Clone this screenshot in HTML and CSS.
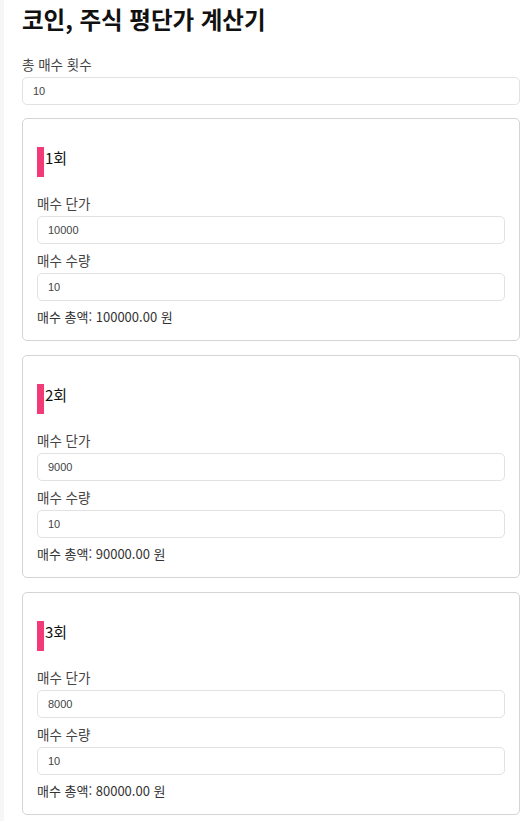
FILE: index.html
```html
<!DOCTYPE html>
<html lang="ko">
<head>
  <meta charset="UTF-8">
  <meta name="viewport" content="width=device-width, initial-scale=1.0">
  <title>코인, 주식 평단가 계산기</title>
  <link rel="stylesheet" href="styles.css">
</head>
<body>
  <div class="container">
    <h1 class="title">코인, 주식 평단가 계산기</h1>

    <label class="label" for="count">총 매수 횟수</label>
    <input class="input" id="count" type="text" value="10">

    <div class="rounds">
      <div class="round">
        <h3 class="round-title">1회</h3>
        <label class="label">매수 단가</label>
        <input class="input" type="text" value="10000">
        <label class="label">매수 수량</label>
        <input class="input" type="text" value="10">
        <div class="total">매수 총액: 100000.00 원</div>
      </div>

      <div class="round">
        <h3 class="round-title">2회</h3>
        <label class="label">매수 단가</label>
        <input class="input" type="text" value="9000">
        <label class="label">매수 수량</label>
        <input class="input" type="text" value="10">
        <div class="total">매수 총액: 90000.00 원</div>
      </div>

      <div class="round">
        <h3 class="round-title">3회</h3>
        <label class="label">매수 단가</label>
        <input class="input" type="text" value="8000">
        <label class="label">매수 수량</label>
        <input class="input" type="text" value="10">
        <div class="total">매수 총액: 80000.00 원</div>
      </div>
    </div>
  </div>
</body>
</html>
```

FILE: styles.css
```css
/* Estilos generales */
body {
  margin: 0;
  background: #f6f6f6;
  font-family: "Noto Sans CJK KR", "Noto Sans", sans-serif;
  color: #333;
}

.container {
  margin-left: 4px;
  background: #fff;
  padding: 5px 12px 20px 18px;
  min-height: 100vh;
  box-sizing: border-box;
}

.title {
  margin: 0 0 22px;
  font-size: 23.5px;
  line-height: 28px;
  font-weight: 700;
  color: #111;
}

.label {
  display: block;
  font-size: 13.5px;
  line-height: 18px;
  color: #444;
  margin-bottom: 4px;
}

.input {
  display: block;
  width: 100%;
  box-sizing: border-box;
  height: 28px;
  padding: 0 10px;
  margin: 0 0 7px;
  border: 1px solid #e2e2e2;
  border-radius: 5px;
  font-family: "Liberation Sans", Arial, sans-serif;
  font-size: 11px;
  font-weight: 400;
  color: #444;
  background: #fff;
}

.rounds {
  display: flex;
  flex-direction: column;
  gap: 14px;
  margin-top: 13px;
}

.round {
  border: 1px solid #d4d4d4;
  border-radius: 5px;
  padding: 14px;
}

.round-title {
  margin: 14px 0 17px;
  height: 30px;
  border-left: 7px solid #f23a78;
  padding-left: 1px;
  font-size: 15px;
  line-height: 22px;
  font-weight: 400;
  color: #111;
}

.total {
  font-size: 13px;
  line-height: 18px;
  color: #333;
}
```
